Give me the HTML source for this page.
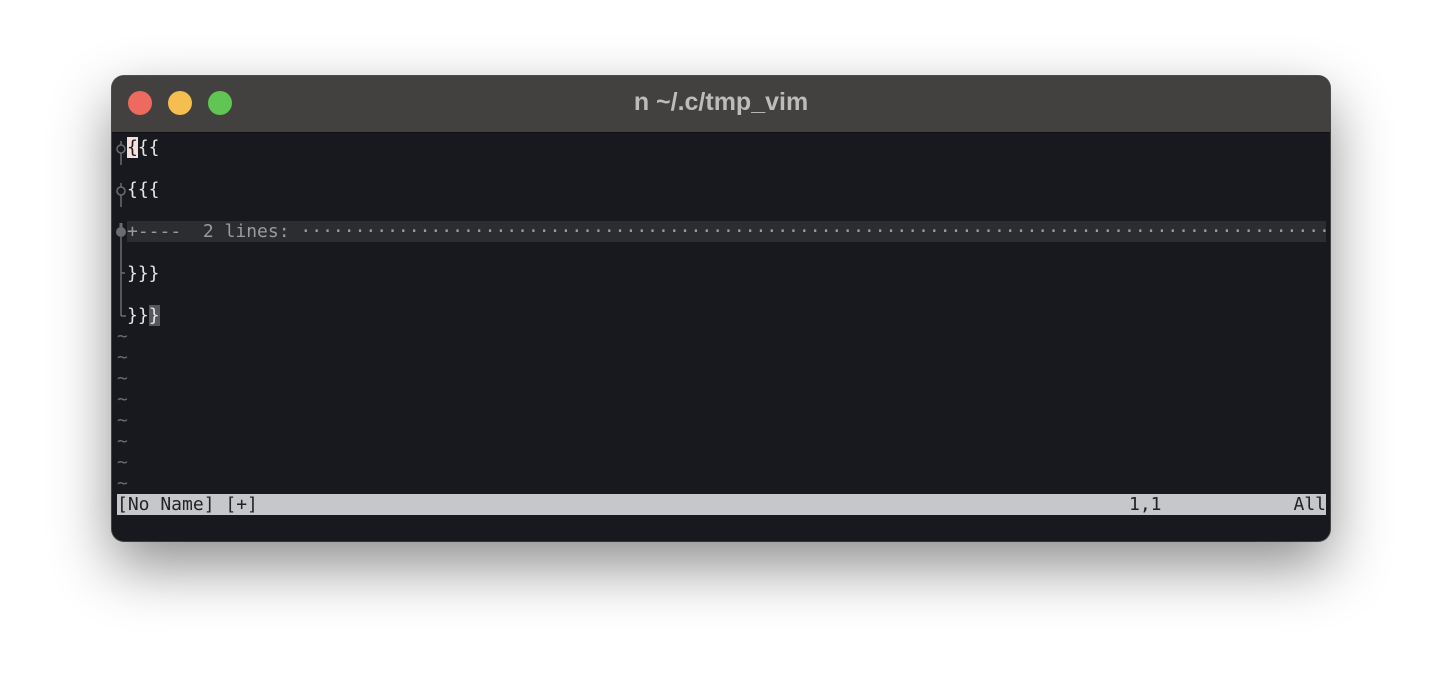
<!DOCTYPE html>
<html><head><style>
body{margin:0;width:1442px;height:690px;background:#fff;position:relative;overflow:hidden;font-family:"DejaVu Sans Mono","Liberation Mono",monospace;}
.win{position:absolute;left:112px;top:76px;width:1218px;height:465px;border-radius:12px;background:#18191e;box-shadow:0 25px 60px rgba(0,0,0,.45),0 0 0 1px #555;overflow:hidden;}
.title{position:absolute;left:0;top:0;width:100%;height:56px;background:#434140;border-bottom:1px solid #111;}
.title .t{position:absolute;left:0;right:0;top:12px;text-align:center;font:bold 25px "Liberation Sans",sans-serif;color:#bdbcbb;}
.dot{position:absolute;top:15px;width:24px;height:24px;border-radius:50%;}
.row{position:absolute;left:5px;height:21px;line-height:21px;font-size:18px;color:#e6e6e6;white-space:pre;overflow:hidden;}
.t1{color:#6b6c72}
.fold{background:#2c2d31;color:#9a9a9e;left:15px;width:1199px;}
.status{position:absolute;left:5px;top:418px;width:1209px;height:21px;line-height:21px;background:#c6c7cb;color:#222;font-size:18px;white-space:pre;}
</style></head><body>
<div class="win">
<div class="title"><div class="t">n ~/.c/tmp_vim</div>
<div class="dot" style="left:16px;background:#ec6a5e"></div>
<div class="dot" style="left:56px;background:#f4bf4f"></div>
<div class="dot" style="left:96px;background:#61c554"></div></div>
<svg style="position:absolute;left:0;top:57px" width="20" height="190">
<g stroke="#6b6c72" stroke-width="1.5" fill="none">
<line x1="9" y1="20" x2="9" y2="32"/><line x1="9" y1="62" x2="9" y2="74"/>
<line x1="9" y1="104" x2="9" y2="183"/><line x1="9" y1="140" x2="13" y2="140"/><line x1="9" y1="183" x2="14" y2="183"/>
<circle cx="9" cy="16" r="4"/><line x1="9" y1="8" x2="9" y2="12"/>
<circle cx="9" cy="58" r="4"/><line x1="9" y1="50" x2="9" y2="54"/>
</g><circle cx="9" cy="99" r="5" fill="#6b6c72"/><rect x="7.5" y="90" width="3" height="6" fill="#6b6c72"/></svg>
<div class="row" style="top:61px;left:15px"><span style="background:#f5e0dc;color:#18191e">{</span>{{</div>
<div class="row" style="top:103px;left:15px">{{{</div>
<div class="row fold" style="top:145px">+----  2 lines: ·······································································································································</div>
<div class="row" style="top:187px;left:15px">}}}</div>
<div class="row" style="top:229px;left:15px">}}<span style="background:#56575c">}</span></div>
<div class="row t1" style="top:250px">~</div>
<div class="row t1" style="top:271px">~</div>
<div class="row t1" style="top:292px">~</div>
<div class="row t1" style="top:313px">~</div>
<div class="row t1" style="top:334px">~</div>
<div class="row t1" style="top:355px">~</div>
<div class="row t1" style="top:376px">~</div>
<div class="row t1" style="top:397px">~</div>
<div class="status">[No Name] [+]<span style="position:absolute;left:1012px">1,1</span><span style="position:absolute;right:0">All</span></div>
</div>
</body></html>
